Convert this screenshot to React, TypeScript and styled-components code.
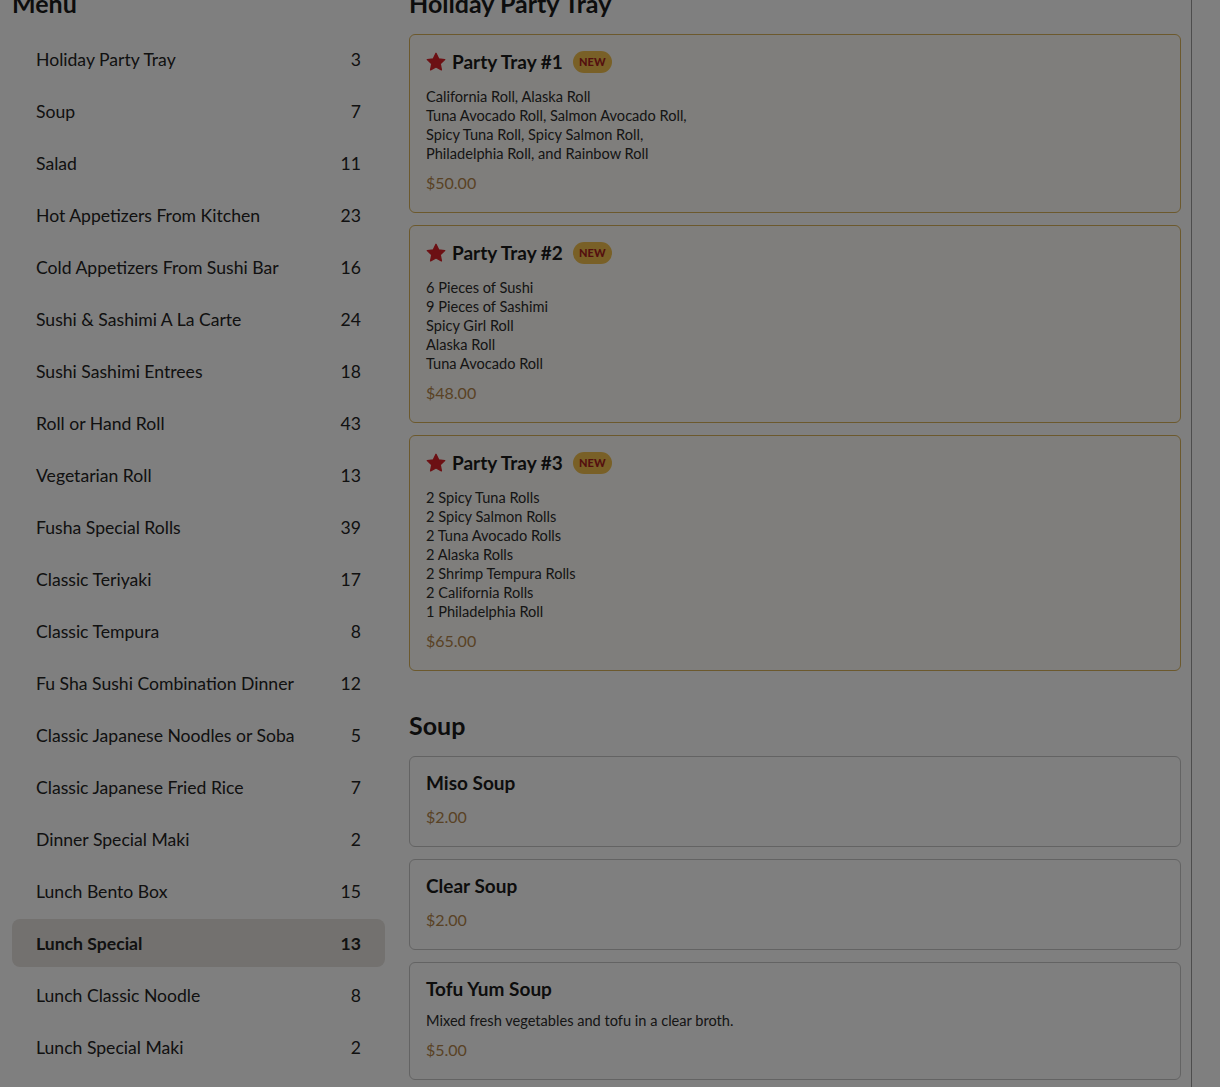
import React from 'react';
import styled, { createGlobalStyle } from 'styled-components';

const GlobalStyle = createGlobalStyle`
  html, body {
    margin: 0;
    padding: 0;
    background: #ffffff;
    font-family: 'Lato', 'Open Sans', sans-serif;
    color: #1f1f1f;
    overflow: hidden;
  }
`;

// page layout
const Page = styled.div`
  display: flex;
  height: 1087px;
  overflow: hidden;
`;

const Layout = styled.div`
  flex: 1;
  display: grid;
  grid-template-columns: 373px 1fr;
  column-gap: 24px;
  padding: 0 10px 0 12px;
  margin-top: -13px;
`;

const CartEdge = styled.aside`
  width: 28px;
  border-left: 1px solid #9a9a9a;
`;

const Heading = styled.h2`
  margin: 0;
  font-size: 25px;
  line-height: 32px;
  font-weight: 700;
  color: #1a1a1a;
`;

// sidebar
const Sidebar = styled.nav`
  display: flex;
  flex-direction: column;
`;

const CategoryList = styled.ul`
  list-style: none;
  margin: 16px 0 0;
  padding: 0;
  display: flex;
  flex-direction: column;
  gap: 4px;
`;

const CategoryItem = styled.li<{ $active?: boolean }>`
  display: flex;
  align-items: center;
  justify-content: space-between;
  height: 48px;
  padding: 0 24px;
  border-radius: 8px;
  font-size: 17.6px;
  font-weight: ${({ $active }) => ($active ? 700 : 400)};
  background: ${({ $active }) => ($active ? '#e6e3df' : 'transparent')};
  color: #222;
`;

// main menu
const Main = styled.main`
  display: flex;
  flex-direction: column;
`;

const Section = styled.section`
  display: flex;
  flex-direction: column;
  gap: 12px;
  margin-bottom: 38px;

  ${Heading} {
    margin-bottom: 3px;
  }
`;

const Card = styled.article<{ $featured?: boolean }>`
  border: 1px solid ${({ $featured }) => ($featured ? '#d9b25a' : '#c6c6c6')};
  background: ${({ $featured }) => ($featured ? '#fffdf8' : '#ffffff')};
  border-radius: 6px;
  padding: 16px 16px 18px;
`;

const TitleRow = styled.div<{ $featured?: boolean }>`
  display: flex;
  align-items: center;
  gap: 6px;
  height: ${({ $featured }) => ($featured ? '22px' : '20px')};
`;

const Title = styled.h3`
  margin: 0;
  font-size: 19px;
  line-height: 22px;
  font-weight: 700;
  color: #1a1a1a;
`;

const Badge = styled.span`
  margin-left: 4px;
  background: #f2c14e;
  color: #a91e1e;
  font-size: 11px;
  font-weight: 900;
  line-height: 22px;
  padding: 0 6px;
  border-radius: 11px;
  letter-spacing: 0.2px;
`;

const Description = styled.div<{ $featured?: boolean }>`
  margin-top: ${({ $featured }) => ($featured ? '14px' : '12px')};
  font-size: 14.6px;
  line-height: 19px;
  color: #2b2b2b;
`;

const Price = styled.div<{ $afterDesc?: boolean }>`
  margin-top: ${({ $afterDesc }) => ($afterDesc ? '9px' : '13px')};
  font-size: 16px;
  line-height: 22px;
  color: #b3854a;
`;

const Overlay = styled.div`
  position: fixed;
  inset: 0;
  background: rgba(0, 0, 0, 0.5);
  z-index: 10;
`;

const Star = () => (
  <svg width="20" height="20" viewBox="0 0 24 24" aria-hidden="true">
    <path
      d="M12 1.5l3.2 6.7 7.3.9-5.4 5.1 1.4 7.3L12 18l-6.5 3.5 1.4-7.3-5.4-5.1 7.3-.9z"
      fill="#d92128"
      stroke="#d92128"
      strokeWidth="1.6"
      strokeLinejoin="round"
    />
  </svg>
);

type Item = { name: string; price: string; desc?: string[]; featured?: boolean };

const categories: [string, number][] = [
  ['Holiday Party Tray', 3],
  ['Soup', 7],
  ['Salad', 11],
  ['Hot Appetizers From Kitchen', 23],
  ['Cold Appetizers From Sushi Bar', 16],
  ['Sushi & Sashimi A La Carte', 24],
  ['Sushi Sashimi Entrees', 18],
  ['Roll or Hand Roll', 43],
  ['Vegetarian Roll', 13],
  ['Fusha Special Rolls', 39],
  ['Classic Teriyaki', 17],
  ['Classic Tempura', 8],
  ['Fu Sha Sushi Combination Dinner', 12],
  ['Classic Japanese Noodles or Soba', 5],
  ['Classic Japanese Fried Rice', 7],
  ['Dinner Special Maki', 2],
  ['Lunch Bento Box', 15],
  ['Lunch Special', 13],
  ['Lunch Classic Noodle', 8],
  ['Lunch Special Maki', 2],
];

const sections: { title: string; items: Item[] }[] = [
  {
    title: 'Holiday Party Tray',
    items: [
      {
        name: 'Party Tray #1',
        price: '$50.00',
        featured: true,
        desc: [
          'California Roll, Alaska Roll',
          'Tuna Avocado Roll, Salmon Avocado Roll,',
          'Spicy Tuna Roll, Spicy Salmon Roll,',
          'Philadelphia Roll, and Rainbow Roll',
        ],
      },
      {
        name: 'Party Tray #2',
        price: '$48.00',
        featured: true,
        desc: ['6 Pieces of Sushi', '9 Pieces of Sashimi', 'Spicy Girl Roll', 'Alaska Roll', 'Tuna Avocado Roll'],
      },
      {
        name: 'Party Tray #3',
        price: '$65.00',
        featured: true,
        desc: [
          '2 Spicy Tuna Rolls',
          '2 Spicy Salmon Rolls',
          '2 Tuna Avocado Rolls',
          '2 Alaska Rolls',
          '2 Shrimp Tempura Rolls',
          '2 California Rolls',
          '1 Philadelphia Roll',
        ],
      },
    ],
  },
  {
    title: 'Soup',
    items: [
      { name: 'Miso Soup', price: '$2.00' },
      { name: 'Clear Soup', price: '$2.00' },
      { name: 'Tofu Yum Soup', price: '$5.00', desc: ['Mixed fresh vegetables and tofu in a clear broth.'] },
    ],
  },
];

export default function App() {
  return (
    <>
      <GlobalStyle />
      <Page>
        <Layout>
          <Sidebar>
            <Heading>Menu</Heading>
            <CategoryList>
              {categories.map(([name, count]) => (
                <CategoryItem key={name} $active={name === 'Lunch Special'}>
                  <span>{name}</span>
                  <span>{count}</span>
                </CategoryItem>
              ))}
            </CategoryList>
          </Sidebar>
          <Main>
            {sections.map((section) => (
              <Section key={section.title}>
                <Heading>{section.title}</Heading>
                {section.items.map((item) => (
                  <Card key={item.name} $featured={item.featured}>
                    <TitleRow $featured={item.featured}>
                      {item.featured && <Star />}
                      <Title>{item.name}</Title>
                      {item.featured && <Badge>NEW</Badge>}
                    </TitleRow>
                    {item.desc && (
                      <Description $featured={item.featured}>
                        {item.desc.map((line) => (
                          <div key={line}>{line}</div>
                        ))}
                      </Description>
                    )}
                    <Price $afterDesc={!!item.desc}>{item.price}</Price>
                  </Card>
                ))}
              </Section>
            ))}
          </Main>
        </Layout>
        <CartEdge />
      </Page>
      <Overlay />
    </>
  );
}
